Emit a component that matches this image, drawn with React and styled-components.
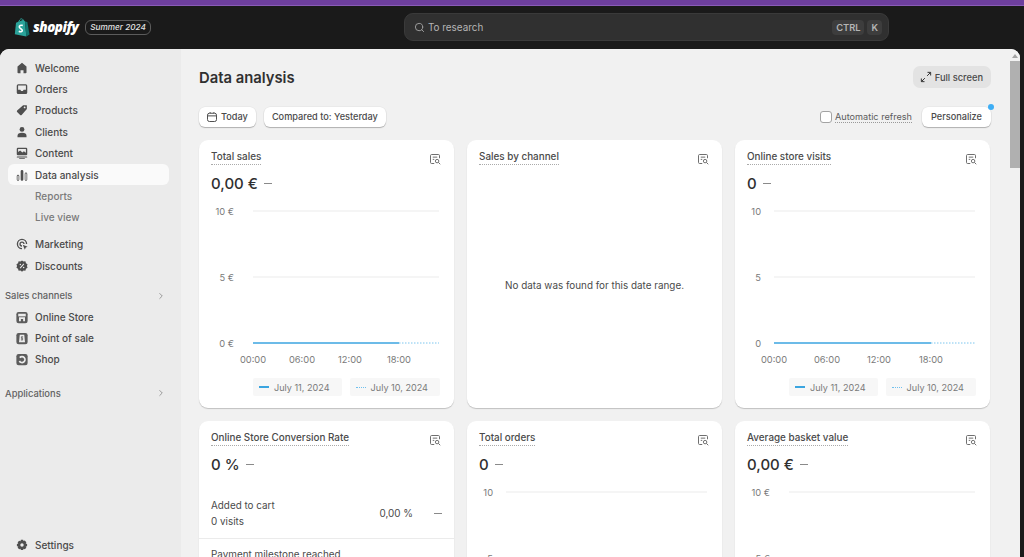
import styled, { createGlobalStyle } from 'styled-components';
import { Search, ChevronRight } from 'lucide-react';

const GlobalStyle = createGlobalStyle`
  html, body { margin: 0; height: 100%; overflow: hidden; background: #1a1a1a; }
  body { font-family: Inter, "Liberation Sans", sans-serif; color: #303030; }
  #root { height: 100%; }
`;

const Page = styled.div`
  height: 557px;
  width: 1024px;
  display: flex;
  flex-direction: column;
  overflow: hidden;
  background: #1a1a1a;
`;

const PurpleStrip = styled.div`
  height: 6px;
  flex: none;
  background: #6e3f9e;
  border-bottom: 1px solid #8a5cb8;
  box-sizing: border-box;
`;

const TopBar = styled.header`
  height: 42.500px;
  flex: none;
  display: flex;
  align-items: center;
  position: relative;
  padding-left: 14px;
  box-sizing: border-box;
`;

const Logo = styled.div`
  display: flex;
  align-items: center;
  gap: 3px;
  color: #fff;
  font-family: "Open Sans", "Liberation Sans", sans-serif;
  font-weight: 800;
  font-style: italic;
  font-size: 13.500px;
  letter-spacing: -0.5px;
`;

const Badge = styled.span`
  margin-left: 7px;
  height: 13px;
  padding: 0 4px;
  display: flex;
  align-items: center;
  border: 1px solid #5c5c5c;
  border-radius: 6px;
  color: #e3e3e3;
  font-size: 8.200px;
  font-style: italic;
  font-weight: 500;
`;

const SearchBox = styled.div`
  position: absolute;
  left: 404px;
  top: 7px;
  width: 485px;
  height: 28px;
  box-sizing: border-box;
  padding: 0 6px 0 9px;
  display: flex;
  align-items: center;
  background: #303030;
  border: 1px solid #3a3a3a;
  border-radius: 9px;
  color: #b5b5b5;
  font-size: 9.900px;
`;

const SearchText = styled.span`
  margin-left: 3px;
  flex: 1;
`;

const Key = styled.kbd`
  font-family: inherit;
  font-size: 9.300px;
  font-weight: 600;
  height: 15px;
  padding: 0 4px;
  margin-left: 3px;
  display: flex;
  align-items: center;
  justify-content: center;
  background: #3d3d3d;
  border-radius: 4px;
  color: #b5b5b5;
`;

const Body = styled.div`
  flex: 1;
  min-height: 0;
  display: flex;
  margin-right: 4px;
  border-radius: 9px 9px 0 0;
  overflow: hidden;
  background: #f1f1f1;
`;

const Sidebar = styled.nav`
  width: 181px;
  flex: none;
  box-sizing: border-box;
  background: #ebebeb;
  padding: 8.500px 12px 0 8px;
  display: flex;
  flex-direction: column;
`;

const NavItem = styled.div`
  height: 21.400px;
  flex: none;
  display: flex;
  align-items: center;
  gap: 7px;
  padding-left: ${p => (p.$sub ? '27px' : '8px')};
  border-radius: 6px;
  font-size: 10px;
  color: ${p => (p.$sub ? '#7a7a7a' : '#4a4a4a')};
  font-weight: ${p => (p.$active ? 550 : 450)};
  background: ${p => (p.$active ? '#fafafa' : 'transparent')};
  margin-bottom: ${p => p.$gap || 0}px;
`;

const IconSlot = styled.span`
  width: 12px;
  height: 12px;
  flex: none;
  display: flex;
  color: #4f4f4f;
`;

const SectionHead = styled.div`
  height: 20px;
  margin: ${p => p.$top}px 0 0 -3px;
  padding-right: 3px;
  display: flex;
  align-items: center;
  justify-content: space-between;
  font-size: 9.400px;
  font-weight: 550;
  color: #616161;
`;

const Spacer = styled.div`
  flex: 1;
`;

const Main = styled.main`
  flex: 1;
  min-width: 0;
  padding: 0 19px 0 18px;
  overflow: hidden;
`;

const TitleRow = styled.div`
  height: 57.500px;
  display: flex;
  align-items: center;
  justify-content: space-between;
`;

const Title = styled.h1`
  margin: 1px 0 0;
  font-size: 14.800px;
  font-weight: 620;
  color: #303030;
`;

const GhostButton = styled.button`
  height: 22px;
  padding: 0 8px 0 7px;
  display: flex;
  align-items: center;
  gap: 3px;
  border: 0;
  border-radius: 7px;
  background: #e3e3e3;
  font-family: inherit;
  font-size: 9.300px;
  font-weight: 450;
  color: #4a4a4a;
`;

const FilterRow = styled.div`
  height: 21px;
  margin-bottom: 13px;
  display: flex;
  align-items: center;
  gap: 8px;
`;

const Chip = styled.button`
  position: relative;
  height: 20px;
  padding: 0 ${p => (p.$wide ? 9 : 8)}px 0 ${p => p.$left || 8}px;
  display: flex;
  align-items: center;
  gap: 3px;
  border: 0;
  border-radius: 6px;
  background: #fff;
  box-shadow: 0 1px 1px rgba(0, 0, 0, 0.25), 0 0 0 0.5px rgba(0, 0, 0, 0.06);
  font-family: inherit;
  font-size: 9.200px;
  font-weight: 450;
  color: #4a4a4a;
`;

const Dot = styled.span`
  position: absolute;
  right: -3px;
  top: -3px;
  width: 6px;
  height: 6px;
  border-radius: 50%;
  background: #3eaef5;
`;

const Refresh = styled.label`
  margin-left: auto;
  margin-right: 2px;
  display: flex;
  align-items: center;
  gap: 3px;
  font-size: 9.150px;
  color: #5c5c5c;
  span {
    border-bottom: 1px dotted #999;
  }
`;

const CheckBox = styled.i`
  width: 10px;
  height: 10px;
  border: 1px solid #a3a3a3;
  border-radius: 3px;
  background: #fff;
`;

const CardGrid = styled.div`
  display: grid;
  grid-template-columns: repeat(3, 255px);
  grid-auto-rows: 268px;
  column-gap: 13px;
  row-gap: 13px;
`;

const Card = styled.section`
  position: relative;
  background: #fff;
  border-radius: 9px;
  box-shadow: 0 1px 1px rgba(0, 0, 0, 0.2);
  padding: 10px 0 0;
  display: flex;
  flex-direction: column;
  overflow: hidden;
`;

const CardHead = styled.div`
  display: flex;
  justify-content: space-between;
  padding: 0 13px 0 12px;
`;

const CardTitle = styled.span`
  font-size: 9.900px;
  font-weight: 480;
  line-height: 13px;
  color: #4a4a4a;
  border-bottom: 1px dotted #aaa;
`;

const CardIcon = styled.span`
  width: 12px;
  height: 12px;
  margin-top: 3px;
  color: #6b6b6b;
  display: flex;
`;

const ValueRow = styled.div`
  display: flex;
  align-items: center;
  gap: 6px;
  margin-top: 8px;
  padding-left: 12px;
  height: 20px;
  font-size: 15px;
  font-weight: 500;
  color: #303030;
`;

const Dash = styled.span`
  width: 8px;
  height: 1px;
  background: #8a8a8a;
`;

const ChartSvg = styled.svg`
  display: block;
  margin-top: 4px;
  flex: none;
`;

const Legend = styled.div`
  display: flex;
  justify-content: flex-end;
  gap: 8px;
  padding-right: 14px;
  margin-top: 10px;
`;

const LegendItem = styled.div`
  height: 18px;
  padding: 0 12px 0 6px;
  display: flex;
  align-items: center;
  gap: 5px;
  background: #f7f7f7;
  border-radius: 2px;
  font-size: 9.100px;
  color: #7a7a7a;
`;

const LegendMark = styled.i`
  width: 10px;
  height: 0;
  border-top: ${p => (p.$dotted ? '1px dotted #6fc0ee' : '2px solid #3ba5e0')};
`;

const Empty = styled.div`
  flex: 1;
  display: flex;
  align-items: center;
  justify-content: center;
  padding-bottom: 4px;
  font-size: 9.900px;
  color: #4a4a4a;
`;

const FunnelRow = styled.div`
  margin-top: 24px;
  padding: 0 12px 9px;
  display: flex;
  align-items: center;
  border-bottom: 1px solid #ebebeb;
  font-size: 9.900px;
  color: #4a4a4a;
  line-height: 15.500px;
`;

const FunnelLabel = styled.div`
  flex: 1;
`;

const FunnelValue = styled.span`
  margin-right: 21px;
`;

const FunnelNext = styled.div`
  padding: 9px 12px;
  font-size: 9.900px;
  color: #4a4a4a;
`;

const Scrollbar = styled.div`
  width: 10px;
  flex: none;
  background: #f1f1f1;
  position: relative;
  padding-top: 12px;
  box-sizing: border-box;
  &::before {
    content: '';
    position: absolute;
    top: 5px;
    left: 2px;
    border: 3px solid transparent;
    border-top: 0;
    border-bottom: 4px solid #a3a3a3;
  }
`;

const ScrollThumb = styled.div`
  height: 107px;
  background: #b0b0b0;
`;

const I = ({ children }) => (
  <svg viewBox="0 0 16 16" width="12" height="12" fill="currentColor">{children}</svg>
);

const HomeIcon = () => <I><path d="M8 1 2 6v8a1 1 0 0 0 1 1h3v-4h4v4h3a1 1 0 0 0 1-1V6z" /></I>;
const OrdersIcon = () => <I><path fillRule="evenodd" d="M3 1.500h10A2 2 0 0 1 15 3.500v9a2 2 0 0 1-2 2H3a2 2 0 0 1-2-2v-9a2 2 0 0 1 2-2zM2.800 3.300v5.700h3l1 1.500h2.400l1-1.500h3V3.300z" /></I>;
const TagIcon = () => <I><path fillRule="evenodd" d="M9.500 1.500H14a.5.5 0 0 1 .5.5v4.500L7.500 14.500a1.500 1.500 0 0 1-2 0L1.500 10.500a1.500 1.500 0 0 1 0-2zM11.500 3.300a1.200 1.200 0 1 0 0 2.400 1.200 1.200 0 0 0 0-2.400z" /></I>;
const UserIcon = () => <I><circle cx="8" cy="4.500" r="3.200" /><path d="M2 13c0-2.500 2-4 6-4s6 1.500 6 4v2H2z" /></I>;
const ContentIcon = () => <I><path fillRule="evenodd" d="M2.500 1h11A1.500 1.500 0 0 1 15 2.500v7a1.500 1.500 0 0 1-1.500 1.500h-11A1.500 1.500 0 0 1 1 9.500v-7A1.500 1.500 0 0 1 2.500 1zM2.800 2.800v4l2.700-2 3 2.500 2-1.500 2.700 2V2.800z" /><rect x="1" y="12.500" width="14" height="1.500" rx=".7" /><rect x="4" y="14.500" width="8" height="1.200" rx=".6" /></I>;
const ChartIcon = () => <I><path fillRule="evenodd" d="M1 9.500a1.700 1.700 0 0 1 3.400 0V14a1.700 1.700 0 0 1-3.400 0zM2 9.500V14a.7.7 0 0 0 1.400 0V9.500a.7.7 0 0 0-1.400 0zM6.200 3a1.800 1.800 0 0 1 3.600 0v11a1.800 1.800 0 0 1-3.600 0zM11.600 6.500a1.700 1.700 0 0 1 3.400 0V14a1.700 1.700 0 0 1-3.400 0zM12.600 6.500V14a.7.7 0 0 0 1.400 0V6.500a.7.7 0 0 0-1.400 0z" /></I>;
const TargetIcon = () => (
  <I>
    <path d="M8 1a7 7 0 0 1 7 7h-1.800A5.200 5.200 0 1 0 8 13.200V15A7 7 0 0 1 8 1z" />
    <path d="M8 4.500A3.500 3.500 0 0 1 11.500 8H9.800A1.800 1.800 0 1 0 8 9.800v1.700a3.500 3.500 0 0 1 0-7z" />
    <path d="M9 9l6.500 2.500-2.500 1.200-1.200 2.800z" />
  </I>
);
const DiscountIcon = () => (
  <I>
    <path fillRule="evenodd" d="M8 .500l2 1.500 2.500-.2.8 2.400 2.100 1.400-.8 2.400.8 2.400-2.100 1.400-.8 2.400-2.500-.2-2 1.500-2-1.500-2.500.2-.8-2.400L.6 10.400l.8-2.400-.8-2.400 2.100-1.400.8-2.400L6 2zM10 4.800 5 10.300l1 .9 5-5.500zM5.800 5a1 1 0 1 0 0 2 1 1 0 0 0 0-2zm4.400 4a1 1 0 1 0 0 2 1 1 0 0 0 0-2z" />
  </I>
);
const StoreIcon = () => (
  <svg viewBox="0 0 16 16" width="13" height="13">
    <rect x=".5" y=".5" width="15" height="15" rx="3" fill="#5c5c5c" />
    <path d="M3 3h10v3.500H3z" fill="#ebebeb" />
    <path d="M4 7.500h8V13H9.500v-3h-3v3H4z" fill="#ebebeb" />
  </svg>
);
const PosIcon = () => (
  <svg viewBox="0 0 16 16" width="13" height="13">
    <rect x=".5" y=".5" width="15" height="15" rx="3" fill="#5c5c5c" />
    <path d="M5 3h6l1 10H4z" fill="#ebebeb" />
    <path d="M9.500 5.800H7.200v2h1.600v2H6.500M8 5v5.800" stroke="#5c5c5c" strokeWidth=".9" fill="none" />
  </svg>
);
const ShopIcon = () => (
  <svg viewBox="0 0 16 16" width="13" height="13">
    <rect x=".5" y=".5" width="15" height="15" rx="3" fill="#5c5c5c" />
    <path d="M5 5.500A4 4 0 1 1 4.500 10" stroke="#ebebeb" strokeWidth="2.200" fill="none" />
  </svg>
);
const GearIcon = () => (
  <I>
    <path fillRule="evenodd" d="M6.500 1h3l.5 1.800 1.700-.7 2.100 2.100-.8 1.700 1.800.6v3l-1.800.5.8 1.700-2.100 2.100-1.700-.8-.5 1.800h-3L6 13l-1.700.8-2.100-2.100.8-1.700L1.200 9.500v-3L3 6l-.8-1.700 2.100-2.100L6 2.900zM8 5.700a2.300 2.300 0 1 0 0 4.600 2.300 2.300 0 0 0 0-4.600z" />
  </I>
);
const ReportIcon = () => (
  <svg viewBox="0 0 16 16" width="12" height="12" fill="none" stroke="currentColor" strokeWidth="1.300">
    <path d="M7 14H3.500A1.500 1.500 0 0 1 2 12.500v-9A1.500 1.500 0 0 1 3.500 2h9A1.500 1.500 0 0 1 14 3.500V7" />
    <path d="M5 5.500h6M5 8.500h2" />
    <circle cx="10.800" cy="10.800" r="2.300" />
    <path d="M12.500 12.500 15 15" />
  </svg>
);
const CalendarIcon = () => (
  <svg viewBox="0 0 16 16" width="12" height="12" fill="none" stroke="#4a4a4a" strokeWidth="1.300">
    <rect x="2" y="3" width="12" height="11" rx="2.500" />
    <path d="M2 6.500h12M5.500 1.500V3M10.500 1.500V3" />
  </svg>
);
const ExpandIcon = () => (
  <svg viewBox="0 0 16 16" width="12" height="12" fill="none" stroke="#303030" strokeWidth="1.300">
    <path d="M9.500 6.500 14 2M10 1.800h4.200V6" />
    <path d="M6.500 9.500 2 14M1.800 10v4.200H6" />
  </svg>
);
const ShopifyBag = () => (
  <svg viewBox="0 0 16 19" width="16" height="19">
    <path d="M2 4.800 9.500 1.800 11 3.500 12.300 18.500 .8 16.300z" fill="#2ba39a" />
    <path d="M11 3.500l2.300.5 2.200 12.500-3.200 2z" fill="#11756f" />
    <path d="M4.500 5C5 2.400 6.300.8 7.500.8S9.300 2 9.300 3.500" stroke="#2ba39a" strokeWidth="1" fill="none" />
    <path d="M8.800 7.600C7 6.800 5 7.700 5.300 9.200c.3 1.500 3 1.600 3 3.200 0 1.400-1.900 1.700-3.500.9" stroke="#fff" strokeWidth="1.600" fill="none" />
  </svg>
);

const SEGMENTS = [
  [<HomeIcon />, 'Welcome'],
  [<OrdersIcon />, 'Orders'],
  [<TagIcon />, 'Products'],
  [<UserIcon />, 'Clients'],
  [<ContentIcon />, 'Content'],
];

const LEFT_TICKS = { x0: 54, x1: 240, blueEnd: 200, times: [54, 103, 151, 200] };
const RIGHT_TICKS = { x0: 39, x1: 240, blueEnd: 196, times: [39, 92, 144, 196] };
const TIME_LABELS = ['00:00', '06:00', '12:00', '18:00'];

// The y axis is the same on every chart, only the labels and x range differ
function Chart({ ticks, labels, labelX }) {
  const rows = [14, 80, 146];
  return (
    <ChartSvg width="255" height="171" fontFamily="Inter, sans-serif" fontSize="9.300" fill="#7a7a7a">
      {rows.map((y, i) => (
        <g key={y}>
          <text x={labelX} y={y + 3.500} textAnchor="end">{labels[i]}</text>
          {i < 2 && <line x1={ticks.x0} x2={ticks.x1} y1={y} y2={y} stroke="#ebebeb" />}
        </g>
      ))}
      <line x1={ticks.x0} x2={ticks.blueEnd} y1="146" y2="146" stroke="#3ba5e0" strokeWidth="1.600" />
      <line x1={ticks.blueEnd} x2={ticks.x1} y1="146" y2="146" stroke="#7cc6ef" strokeWidth="1" strokeDasharray="1.500 1.500" />
      {ticks.times.map((x, i) => (
        <text key={x} x={x} y="166" textAnchor="middle">{TIME_LABELS[i]}</text>
      ))}
    </ChartSvg>
  );
}

function ChartLegend() {
  return (
    <Legend>
      <LegendItem><LegendMark />July 11, 2024</LegendItem>
      <LegendItem><LegendMark $dotted />July 10, 2024</LegendItem>
    </Legend>
  );
}

function CardTop({ title, value }) {
  return (
    <>
      <CardHead>
        <CardTitle>{title}</CardTitle>
        <CardIcon><ReportIcon /></CardIcon>
      </CardHead>
      {value && <ValueRow>{value}<Dash /></ValueRow>}
    </>
  );
}

export default function App() {
  return (
    <Page>
      <GlobalStyle />
      <PurpleStrip />
      <TopBar>
        <Logo><ShopifyBag />shopify</Logo>
        <Badge>Summer 2024</Badge>
        <SearchBox>
          <Search size={11} color="#a3a3a3" />
          <SearchText>To research</SearchText>
          <Key>CTRL</Key>
          <Key>K</Key>
        </SearchBox>
      </TopBar>
      <Body>
        <Sidebar>
          {SEGMENTS.map(([icon, label]) => (
            <NavItem key={label}><IconSlot>{icon}</IconSlot>{label}</NavItem>
          ))}
          <NavItem $active><IconSlot><ChartIcon /></IconSlot>Data analysis</NavItem>
          <NavItem $sub>Reports</NavItem>
          <NavItem $sub $gap={5.500}>Live view</NavItem>
          <NavItem><IconSlot><TargetIcon /></IconSlot>Marketing</NavItem>
          <NavItem><IconSlot><DiscountIcon /></IconSlot>Discounts</NavItem>
          <SectionHead $top={9.500}>Sales channels<ChevronRight size={10} color="#8a8a8a" /></SectionHead>
          <NavItem><IconSlot><StoreIcon /></IconSlot>Online Store</NavItem>
          <NavItem><IconSlot><PosIcon /></IconSlot>Point of sale</NavItem>
          <NavItem><IconSlot><ShopIcon /></IconSlot>Shop</NavItem>
          <SectionHead $top={13}>Applications<ChevronRight size={10} color="#8a8a8a" /></SectionHead>
          <Spacer />
          <NavItem $gap={1}><IconSlot><GearIcon /></IconSlot>Settings</NavItem>
        </Sidebar>
        <Main>
          <TitleRow>
            <Title>Data analysis</Title>
            <GhostButton><ExpandIcon />Full screen</GhostButton>
          </TitleRow>
          <FilterRow>
            <Chip $left={7}><CalendarIcon />Today</Chip>
            <Chip>Compared to: Yesterday</Chip>
            <Refresh><CheckBox /><span>Automatic refresh</span></Refresh>
            <Chip $wide $left={9}>Personalize<Dot /></Chip>
          </FilterRow>
          <CardGrid>
            <Card>
              <CardTop title="Total sales" value="0,00 €" />
              <Chart ticks={LEFT_TICKS} labels={['10 €', '5 €', '0 €']} labelX={35} />
              <ChartLegend />
            </Card>
            <Card>
              <CardTop title="Sales by channel" />
              <Empty>No data was found for this date range.</Empty>
            </Card>
            <Card>
              <CardTop title="Online store visits" value="0" />
              <Chart ticks={RIGHT_TICKS} labels={['10', '5', '0']} labelX={26} />
              <ChartLegend />
            </Card>
            <Card>
              <CardTop title="Online Store Conversion Rate" value="0 %" />
              <FunnelRow>
                <FunnelLabel>Added to cart<br />0 visits</FunnelLabel>
                <FunnelValue>0,00 %</FunnelValue>
                <Dash />
              </FunnelRow>
              <FunnelNext>Payment milestone reached</FunnelNext>
            </Card>
            <Card>
              <CardTop title="Total orders" value="0" />
              <Chart ticks={RIGHT_TICKS} labels={['10', '5', '0']} labelX={26} />
            </Card>
            <Card>
              <CardTop title="Average basket value" value="0,00 €" />
              <Chart ticks={LEFT_TICKS} labels={['10 €', '5 €', '0 €']} labelX={35} />
            </Card>
          </CardGrid>
        </Main>
        <Scrollbar><ScrollThumb /></Scrollbar>
      </Body>
    </Page>
  );
}
